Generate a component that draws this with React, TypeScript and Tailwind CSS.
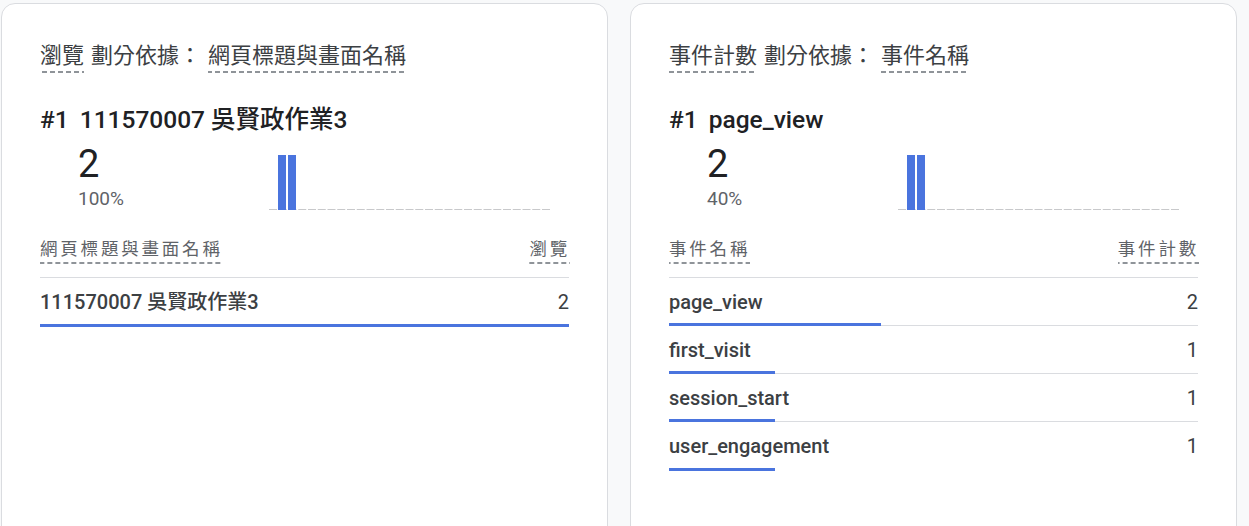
const FONT = "font-['Roboto','Noto_Sans_CJK_TC',sans-serif]";

type Row = { label: string; value: number; pct: number };

type CardProps = {
  metric: string;
  dimension: string;
  top: string;
  big: string;
  share: string;
  rows: Row[];
};

const dashed =
  "bg-[linear-gradient(to_right,#8f9499_62%,transparent_62%)] bg-[length:8px_2px] bg-bottom bg-repeat-x pb-[3px]";

function Sparkline() {
  return (
    <svg width="282" height="56" viewBox="0 0 282 56" className="block">
      <line x1="0" y1="55.5" x2="282" y2="55.5" stroke="#c8c9cb" strokeWidth="1" strokeDasharray="8 1.75" />
      <rect x="9" y="1" width="8" height="55" fill="#4a74de" />
      <rect x="19" y="1" width="8" height="55" fill="#4a74de" />
    </svg>
  );
}

function Card({ metric, dimension, top, big, share, rows }: CardProps) {
  return (
    <div className="h-[560px] w-[607px] shrink-0 rounded-[14px] border border-[#dadce0] bg-white px-[38px] pt-[38px]">
      <div className="flex text-[22px] leading-[28px] text-[#3c4043]">
        <span className={dashed}>{metric}</span>
        <span className="mx-[7px]">劃分依據：</span>
        <span className={dashed}>{dimension}</span>
      </div>

      <div className="mt-[31px] text-[24.5px] font-medium leading-[32px] text-[#202124]">
        <span className="mr-[11px]">#1</span>
        {top}
      </div>

      <div className="mt-[9px] flex">
        <div className="w-[229px] shrink-0 pl-[38px]">
          <div className="text-[38px] leading-[38px] text-[#202124]">{big}</div>
          <div className="mt-[5px] text-[19px] leading-[22px] text-[#5f6368]">{share}</div>
        </div>
        <div className="pt-[9px]">
          <Sparkline />
        </div>
      </div>

      <div className="mt-[27px] flex justify-between text-[17.5px] leading-[24px] tracking-[2.8px] text-[#5f6368]">
        <span className={dashed}>{dimension}</span>
        <span className={dashed + " mr-[-1px]"}>{metric}</span>
      </div>

      <div className="mt-[13px] border-t border-[#dadce0]">
        {rows.map((r, i) => (
          <div
            key={r.label}
            className={
              "relative flex h-[48px] items-center justify-between text-[20px] text-[#3c4043] " +
              (i < rows.length - 1 ? "border-b border-[#dadce0]" : "")
            }
          >
            <span className="font-medium">{r.label}</span>
            <span>{r.value}</span>
            <div
              className="absolute bottom-[-1px] left-0 h-[3px] bg-[#4a74de]"
              style={{ width: `${r.pct}%` }}
            />
          </div>
        ))}
      </div>
    </div>
  );
}

export default function App() {
  return (
    <div className={`h-[526px] overflow-hidden bg-[#f8f9fa] pl-[1px] pt-[3px] ${FONT}`}>
      <div className="flex gap-[22px]">
        <Card
          metric="瀏覽"
          dimension="網頁標題與畫面名稱"
          top="111570007 吳賢政作業3"
          big="2"
          share="100%"
          rows={[{ label: "111570007 吳賢政作業3", value: 2, pct: 100 }]}
        />
        <Card
          metric="事件計數"
          dimension="事件名稱"
          top="page_view"
          big="2"
          share="40%"
          rows={[
            { label: "page_view", value: 2, pct: 40 },
            { label: "first_visit", value: 1, pct: 20 },
            { label: "session_start", value: 1, pct: 20 },
            { label: "user_engagement", value: 1, pct: 20 },
          ]}
        />
      </div>
    </div>
  );
}
